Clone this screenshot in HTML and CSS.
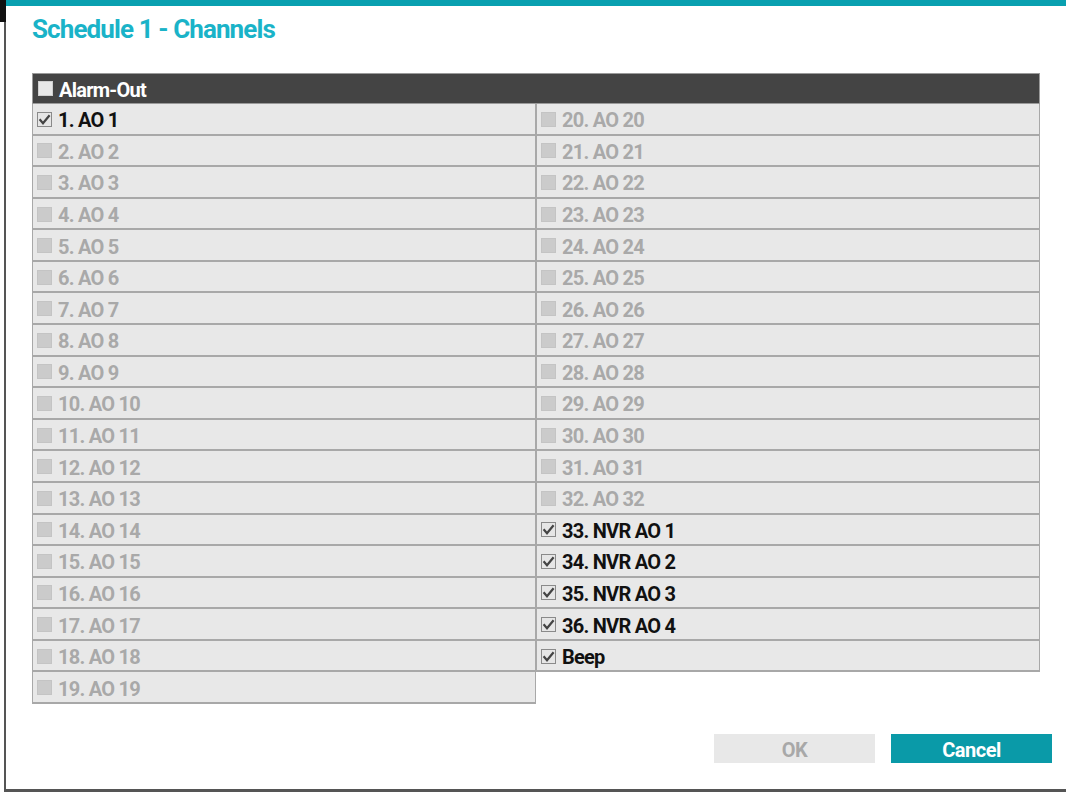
FILE: index.html
```html
<!DOCTYPE html>
<html>
<head>
<meta charset="utf-8">
<link rel="stylesheet" href="styles.css">
</head>
<body>
<div class="corner"></div>
<div class="window">
  <h1 class="title">Schedule 1 - Channels</h1>
  <div class="table">
    <div class="head"><span class="cb cb-head"></span><span class="label">Alarm-Out</span></div>
    <div class="cols">
      <div class="col">
        <div class="cell on"><span class="cb cb-on"><svg viewBox="0 0 13 13"><path d="M1.6 6.2 L5 10.2 L11.6 2.2" /></svg></span><span class="label">1. AO 1</span></div>
        <div class="cell off"><span class="cb cb-off"></span><span class="label">2. AO 2</span></div>
        <div class="cell off"><span class="cb cb-off"></span><span class="label">3. AO 3</span></div>
        <div class="cell off"><span class="cb cb-off"></span><span class="label">4. AO 4</span></div>
        <div class="cell off"><span class="cb cb-off"></span><span class="label">5. AO 5</span></div>
        <div class="cell off"><span class="cb cb-off"></span><span class="label">6. AO 6</span></div>
        <div class="cell off"><span class="cb cb-off"></span><span class="label">7. AO 7</span></div>
        <div class="cell off"><span class="cb cb-off"></span><span class="label">8. AO 8</span></div>
        <div class="cell off"><span class="cb cb-off"></span><span class="label">9. AO 9</span></div>
        <div class="cell off"><span class="cb cb-off"></span><span class="label">10. AO 10</span></div>
        <div class="cell off"><span class="cb cb-off"></span><span class="label">11. AO 11</span></div>
        <div class="cell off"><span class="cb cb-off"></span><span class="label">12. AO 12</span></div>
        <div class="cell off"><span class="cb cb-off"></span><span class="label">13. AO 13</span></div>
        <div class="cell off"><span class="cb cb-off"></span><span class="label">14. AO 14</span></div>
        <div class="cell off"><span class="cb cb-off"></span><span class="label">15. AO 15</span></div>
        <div class="cell off"><span class="cb cb-off"></span><span class="label">16. AO 16</span></div>
        <div class="cell off"><span class="cb cb-off"></span><span class="label">17. AO 17</span></div>
        <div class="cell off"><span class="cb cb-off"></span><span class="label">18. AO 18</span></div>
        <div class="cell off"><span class="cb cb-off"></span><span class="label">19. AO 19</span></div>
      </div>
      <div class="col">
        <div class="cell off"><span class="cb cb-off"></span><span class="label">20. AO 20</span></div>
        <div class="cell off"><span class="cb cb-off"></span><span class="label">21. AO 21</span></div>
        <div class="cell off"><span class="cb cb-off"></span><span class="label">22. AO 22</span></div>
        <div class="cell off"><span class="cb cb-off"></span><span class="label">23. AO 23</span></div>
        <div class="cell off"><span class="cb cb-off"></span><span class="label">24. AO 24</span></div>
        <div class="cell off"><span class="cb cb-off"></span><span class="label">25. AO 25</span></div>
        <div class="cell off"><span class="cb cb-off"></span><span class="label">26. AO 26</span></div>
        <div class="cell off"><span class="cb cb-off"></span><span class="label">27. AO 27</span></div>
        <div class="cell off"><span class="cb cb-off"></span><span class="label">28. AO 28</span></div>
        <div class="cell off"><span class="cb cb-off"></span><span class="label">29. AO 29</span></div>
        <div class="cell off"><span class="cb cb-off"></span><span class="label">30. AO 30</span></div>
        <div class="cell off"><span class="cb cb-off"></span><span class="label">31. AO 31</span></div>
        <div class="cell off"><span class="cb cb-off"></span><span class="label">32. AO 32</span></div>
        <div class="cell on"><span class="cb cb-on"><svg viewBox="0 0 13 13"><path d="M1.6 6.2 L5 10.2 L11.6 2.2" /></svg></span><span class="label">33. NVR AO 1</span></div>
        <div class="cell on"><span class="cb cb-on"><svg viewBox="0 0 13 13"><path d="M1.6 6.2 L5 10.2 L11.6 2.2" /></svg></span><span class="label">34. NVR AO 2</span></div>
        <div class="cell on"><span class="cb cb-on"><svg viewBox="0 0 13 13"><path d="M1.6 6.2 L5 10.2 L11.6 2.2" /></svg></span><span class="label">35. NVR AO 3</span></div>
        <div class="cell on"><span class="cb cb-on"><svg viewBox="0 0 13 13"><path d="M1.6 6.2 L5 10.2 L11.6 2.2" /></svg></span><span class="label">36. NVR AO 4</span></div>
        <div class="cell on"><span class="cb cb-on"><svg viewBox="0 0 13 13"><path d="M1.6 6.2 L5 10.2 L11.6 2.2" /></svg></span><span class="label">Beep</span></div>
      </div>
    </div>
  </div>
  <div class="buttons">
    <button class="btn btn-ok">OK</button>
    <button class="btn btn-cancel">Cancel</button>
  </div>
</div>
</body>
</html>
```
FILE: styles.css
```css
* { box-sizing: border-box; }
html, body {
  margin: 0;
  padding: 0;
  width: 1066px;
  height: 792px;
  overflow: hidden;
  background: #ffffff;
  font-family: Roboto, "Liberation Sans", sans-serif;
}
.corner {
  position: absolute;
  left: 0;
  top: 0;
  width: 6px;
  height: 22px;
  background: #111;
}
.window {
  margin-left: 4px;
  width: 1062px;
  height: 792px;
  border-left: 2px solid #555;
  border-top: 6px solid #09a0b0;
  border-bottom: 3px solid #555;
  display: flex;
  flex-direction: column;
}
.title {
  margin: 8px 0 0 26px;
  font-size: 26px;
  line-height: 30px;
  font-weight: 700;
  color: #1ab3c8;
  letter-spacing: -0.9px;
  height: 30px;
}
.table {
  margin: 29px 0 0 26px;
  width: 1008px;
}
.head {
  height: 31px;
  background: #444444;
  border: 1px solid #9a9a9a;
  display: flex;
  align-items: center;
  padding-left: 5px;
  padding-top: 2px;
  color: #ffffff;
}
.cols {
  display: flex;
}
.col {
  width: 504px;
  display: flex;
  flex-direction: column;
}
.cell {
  height: 31.58px;
  background: #e8e8e8;
  border: 1px solid #a8a8a8;
  border-top-width: 0;
  border-bottom-width: 2px;
  display: flex;
  align-items: center;
  padding-left: 4px;
  padding-top: 3px;
}
.label {
  font-size: 20px;
  font-weight: 700;
  letter-spacing: -0.75px;
  margin-left: 6px;
}
.on .label { color: #111111; }
.off .label { color: #a9a9a9; }
.cb {
  width: 15px;
  height: 15px;
  display: inline-block;
  flex: none;
  margin-top: -2px;
}
.cb-head {
  background: #e8e8e8;
  border: 1px solid #cfcfcf;
}
.cb-off {
  background: #cbcbcb;
  border: 1px solid #c4c4c4;
}
.cb-on {
  background: #e6e6e6;
  border: 1px solid #8a8a8a;
}
.cb-on svg {
  display: block;
  width: 13px;
  height: 13px;
}
.cb-on path {
  fill: none;
  stroke: #444444;
  stroke-width: 2.2;
}
.buttons {
  margin-top: auto;
  margin-bottom: 26px;
  display: flex;
  justify-content: flex-end;
  gap: 16px;
  padding-right: 14px;
}
.btn {
  width: 161px;
  height: 29px;
  border: none;
  font-family: Roboto, "Liberation Sans", sans-serif;
  font-size: 20px;
  font-weight: 700;
  letter-spacing: -0.5px;
  padding: 2px 0 0 0;
}
.btn-ok {
  background: #e8e8e8;
  color: #a8a8a8;
}
.btn-cancel {
  background: #0a9aa8;
  color: #ffffff;
}
```
